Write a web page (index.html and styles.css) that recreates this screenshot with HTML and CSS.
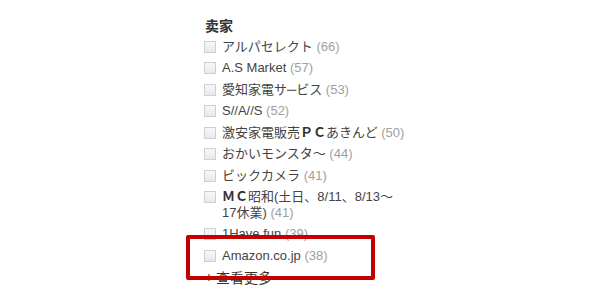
FILE: index.html
```html
<!DOCTYPE html>
<html lang="zh">
<head>
<meta charset="utf-8">
<link rel="stylesheet" href="styles.css">
</head>
<body>
<div class="page">
  <div class="facet">
    <h3 class="facet-title">卖家</h3>
    <ul class="facet-list">
      <li class="item"><span class="cb"></span><span class="label">アルパセレクト <span class="count">(66)</span></span></li>
      <li class="item"><span class="cb"></span><span class="label">A.S Market <span class="count">(57)</span></span></li>
      <li class="item"><span class="cb"></span><span class="label">愛知家電サ─ビス <span class="count">(53)</span></span></li>
      <li class="item"><span class="cb"></span><span class="label">S//A//S <span class="count">(52)</span></span></li>
      <li class="item"><span class="cb"></span><span class="label">激安家電販売<b class="mincho">ＰＣ</b>あきんど <span class="count">(50)</span></span></li>
      <li class="item"><span class="cb"></span><span class="label">おかいモンスタ〜 <span class="count">(44)</span></span></li>
      <li class="item"><span class="cb"></span><span class="label">ビックカメラ <span class="count">(41)</span></span></li>
      <li class="item"><span class="cb"></span><span class="label"><b class="mincho">ＭＣ</b>昭和(土日、8/11、8/13～<br>17休業) <span class="count">(41)</span></span></li>
      <li class="item"><span class="cb"></span><span class="label">1Have fun <span class="count">(39)</span></span></li>
      <li class="item"><span class="cb"></span><span class="label">Amazon.co.jp <span class="count">(38)</span></span></li>
    </ul>
    <div class="more">+ 查看更多</div>
  </div>
  <div class="highlight"></div>
</div>
</body>
</html>
```

FILE: styles.css
```css
html, body {
  margin: 0;
  padding: 0;
  background: #ffffff;
}
.page {
  position: relative;
  width: 600px;
  height: 300px;
  overflow: hidden;
  font-family: "Liberation Sans", Arial, "Noto Sans CJK JP", sans-serif;
  color: #444444;
}
.facet {
  padding: 17px 0 0 204px;
}
.facet-title {
  margin: 0 0 6px 1px;
  font-size: 14px;
  line-height: 16px;
  font-weight: bold;
  color: #333333;
  font-family: "Noto Sans CJK SC", sans-serif;
}
.facet-list {
  list-style: none;
  margin: 0;
  padding: 0;
}
.item {
  display: flex;
  align-items: flex-start;
  font-size: 13px;
  line-height: 16px;
  margin-bottom: 5.43px;
}
.cb {
  flex: none;
  width: 10px;
  height: 10px;
  margin: 2px 6px 0 0;
  border: 1px solid #cfcfcf;
  background: linear-gradient(#f8f8f8, #e8e8e8);
}
.label {
  white-space: nowrap;
}
.mincho {
  font-weight: bold;
  color: #333333;
}
.count {
  color: #a0a0a0;
}
.more {
  margin: 0 0 0 1px;
  font-size: 14px;
  line-height: 16px;
  color: #333333;
  font-family: "Noto Sans CJK SC", sans-serif;
}
.highlight {
  position: absolute;
  left: 186px;
  top: 235px;
  width: 181px;
  height: 37px;
  border: 4px solid #c20000;
  border-radius: 2px;
}
```
